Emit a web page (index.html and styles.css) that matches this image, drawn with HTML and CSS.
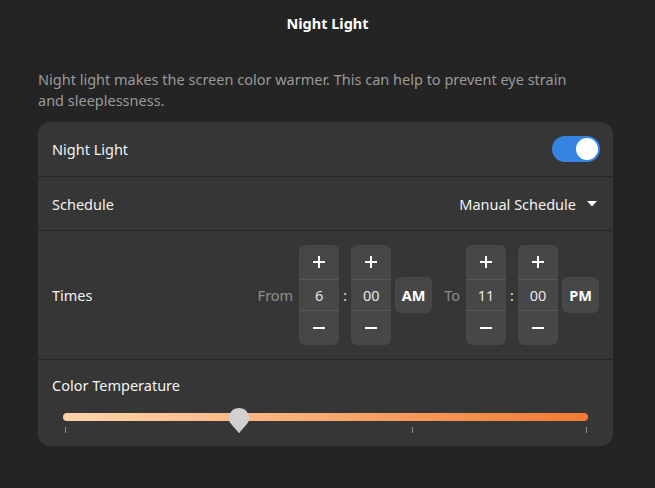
FILE: index.html
```html
<!DOCTYPE html>
<html>
<head>
<meta charset="utf-8">
<link rel="stylesheet" href="styles.css">
</head>
<body>
<header class="header"><h1 class="title">Night Light</h1></header>
<main class="content">
  <p class="desc">Night light makes the screen color warmer. This can help to prevent eye strain and sleeplessness.</p>
  <section class="card">
    <div class="row row-toggle">
      <span class="label">Night Light</span>
      <span class="switch"><span class="knob"></span></span>
    </div>
    <div class="row row-schedule">
      <span class="label">Schedule</span>
      <span class="dropdown">Manual Schedule
        <svg class="caret" width="10" height="6" viewBox="0 0 10 6"><path d="M0 0h10L5 5.5z" fill="#fff"/></svg>
      </span>
    </div>
    <div class="row row-times">
      <span class="label">Times</span>
      <div class="times">
        <span class="dim">From</span>
        <div class="spin">
          <span class="spin-btn"><svg width="12" height="12" viewBox="0 0 12 12"><path d="M5 0h2v5h5v2H7v5H5V7H0V5h5z" fill="#fff"/></svg></span>
          <span class="spin-val">6</span>
          <span class="spin-btn"><svg width="12" height="12" viewBox="0 0 12 12"><path d="M0 5h12v2H0z" fill="#fff"/></svg></span>
        </div>
        <span class="colon">:</span>
        <div class="spin">
          <span class="spin-btn"><svg width="12" height="12" viewBox="0 0 12 12"><path d="M5 0h2v5h5v2H7v5H5V7H0V5h5z" fill="#fff"/></svg></span>
          <span class="spin-val">00</span>
          <span class="spin-btn"><svg width="12" height="12" viewBox="0 0 12 12"><path d="M0 5h12v2H0z" fill="#fff"/></svg></span>
        </div>
        <span class="ampm">AM</span>
        <span class="dim dim-to">To</span>
        <div class="spin">
          <span class="spin-btn"><svg width="12" height="12" viewBox="0 0 12 12"><path d="M5 0h2v5h5v2H7v5H5V7H0V5h5z" fill="#fff"/></svg></span>
          <span class="spin-val">11</span>
          <span class="spin-btn"><svg width="12" height="12" viewBox="0 0 12 12"><path d="M0 5h12v2H0z" fill="#fff"/></svg></span>
        </div>
        <span class="colon">:</span>
        <div class="spin">
          <span class="spin-btn"><svg width="12" height="12" viewBox="0 0 12 12"><path d="M5 0h2v5h5v2H7v5H5V7H0V5h5z" fill="#fff"/></svg></span>
          <span class="spin-val">00</span>
          <span class="spin-btn"><svg width="12" height="12" viewBox="0 0 12 12"><path d="M0 5h12v2H0z" fill="#fff"/></svg></span>
        </div>
        <span class="ampm">PM</span>
      </div>
    </div>
    <div class="row row-temp">
      <span class="label">Color Temperature</span>
      <div class="slider">
        <div class="track"></div>
        <div class="ticks"><i></i><i></i><i></i><i></i></div>
        <svg class="pin" width="22" height="28" viewBox="0 0 22 28"><path d="M11 1a10 10 0 0 1 7.1 17.1L11 26 3.9 18.1A10 10 0 0 1 11 1z" fill="#d0d0d0"/></svg>
      </div>
    </div>
  </section>
</main>
</body>
</html>
```
FILE: styles.css
```css
* { box-sizing: border-box; }
body {
  margin: 0;
  background: #242424;
  color: #fff;
  font-family: "Noto Sans", "Open Sans", sans-serif;
  font-size: 15px;
  width: 655px;
  height: 488px;
  overflow: hidden;
}
.header {
  height: 46px;
  display: flex;
  align-items: center;
  justify-content: center;
}
.title {
  margin: 0;
  font-size: 14.5px;
  font-weight: 700;
}
.content {
  padding: 23px 42px 0 38px;
}
.desc {
  margin: 0 0 11px;
  max-width: 556px;
  color: #9a9a9a;
  font-size: 14.5px;
  line-height: 21px;
}
.card {
  background: #363636;
  border-radius: 12px;
  height: 324px;
  display: flex;
  flex-direction: column;
}
.row {
  display: flex;
  align-items: center;
  justify-content: space-between;
  padding: 0 13px 0 14px;
  border-bottom: 1px solid #262626;
}
.row:last-child { border-bottom: none; }
.label { font-size: 14.5px; color: #f2f2f2; }
.row-toggle { height: 55px; }
.row-schedule { height: 54px; }
.row-times { height: 129px; }
.row-temp {
  flex: 1;
  flex-direction: column;
  align-items: stretch;
  justify-content: flex-start;
  padding: 15px 25px 0 25px;
}
.row-temp .label { margin-left: -11px; }
.switch {
  width: 48px;
  height: 26px;
  border-radius: 13px;
  background: #3584e4;
  display: flex;
  align-items: center;
  justify-content: flex-end;
  padding: 2px;
}
.knob {
  width: 22px;
  height: 22px;
  border-radius: 50%;
  background: #fff;
}
.dropdown {
  display: flex;
  align-items: center;
  gap: 11px;
  font-size: 14.5px;
  color: #f2f2f2;
}
.caret { margin-right: 3px; }
.times {
  display: flex;
  align-items: center;
  margin-right: 1px;
}
.dim { color: #8e8e8e; font-size: 14.5px; margin-right: 6px; }
.dim-to { margin-left: 12px; }
.spin {
  width: 40px;
  height: 100px;
  border-radius: 6px;
  background: #474747;
  display: flex;
  flex-direction: column;
}
.spin-btn, .spin-val {
  display: flex;
  align-items: center;
  justify-content: center;
}
.spin-btn { height: 34px; }
.spin-val {
  height: 32px;
  border-top: 1px solid #575757;
  border-bottom: 1px solid #575757;
  color: #e6e6e6;
  font-size: 14.5px;
}
.colon {
  width: 12px;
  text-align: center;
  color: #e6e6e6;
  font-size: 14px;
}
.ampm {
  margin-left: 4px;
  width: 37px;
  height: 36px;
  border-radius: 6px;
  background: #474747;
  display: flex;
  align-items: center;
  justify-content: center;
  font-weight: 700;
  font-size: 14.5px;
}
.slider {
  position: relative;
  margin-top: 18px;
}
.track {
  height: 8px;
  border-radius: 4px;
  background: linear-gradient(to right, #fdd4aa, #f9b886 35%, #f59a5c 65%, #f47a33);
}
.ticks {
  display: flex;
  justify-content: space-between;
  padding: 0 1px 0 2px;
  margin-top: 6px;
}
.ticks i {
  display: block;
  width: 1px;
  height: 6px;
  background: #8a8a8a;
}
.pin {
  position: absolute;
  left: 165px;
  top: -6px;
}
```
